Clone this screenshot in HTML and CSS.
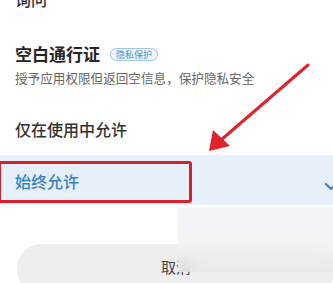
FILE: index.html
```html
<!DOCTYPE html>
<html lang="zh">
<head>
<meta charset="utf-8">
<link rel="stylesheet" href="styles.css">
</head>
<body>
<div class="sheet">
  <div class="opt opt-top">询问</div>
  <div class="opt-block">
    <div class="title-row">
      <span class="title">空白通行证</span>
      <span class="badge">隐私保护</span>
    </div>
    <div class="desc">授予应用权限但返回空信息，保护隐私安全</div>
  </div>
  <div class="opt opt-plain">仅在使用中允许</div>
  <div class="opt-selected">
    <span class="sel-text">始终允许</span>
    <svg class="chev" width="14" height="10" viewBox="0 0 14 10"><path d="M2 2 L7 7 L12 2" fill="none" stroke="#3d7fc0" stroke-width="2" stroke-linecap="round" stroke-linejoin="round"/></svg>
  </div>
  <div class="btn-wrap">
    <div class="cancel">取消</div>
  </div>
  <div class="red-box"></div>
  <svg class="arrow" width="333" height="283" viewBox="0 0 333 283">
    <line x1="308" y1="65" x2="221" y2="140" stroke="#e0222c" stroke-width="3" stroke-linecap="round"/>
    <polygon points="209,151 213,130 230,146" fill="#e0222c"/>
  </svg>
  <div class="veil"></div>
</div>
</body>
</html>
```
FILE: styles.css
```css
html, body {
  margin: 0;
  padding: 0;
  background: #ffffff;
}
body {
  width: 333px;
  height: 283px;
  overflow: hidden;
  font-family: "Noto Sans CJK SC", "Noto Sans", sans-serif;
}
.sheet {
  position: relative;
  width: 333px;
  height: 283px;
  overflow: hidden;
  display: flex;
  flex-direction: column;
}
.sheet > * {
  flex-shrink: 0;
}
.opt {
  padding-left: 15px;
  font-size: 16px;
  color: #333333;
  line-height: 22px;
  height: 22px;
}
.opt-top {
  margin-top: -12px;
  font-weight: 500;
}
.opt-block {
  padding-left: 15px;
  margin-top: 33px;
  display: flex;
  flex-direction: column;
  gap: 5px;
}
.title-row {
  display: flex;
  align-items: center;
  gap: 10px;
  height: 22px;
}
.title {
  font-size: 17px;
  font-weight: 700;
  color: #262626;
  line-height: 22px;
}
.badge {
  font-size: 9px;
  line-height: 11px;
  color: #4a8fd0;
  background: #eef5fd;
  border: 1px solid #9cc3ea;
  border-radius: 8px;
  padding: 0 5px;
}
.desc {
  font-size: 12.6px;
  line-height: 16px;
  color: #666666;
  white-space: nowrap;
}
.opt-plain {
  margin-top: 32px;
  font-weight: 500;
}
.opt-selected {
  margin-top: 15px;
  height: 50px;
  background: #e5f0fb;
  display: flex;
  align-items: center;
  justify-content: space-between;
  padding-left: 15px;
  padding-top: 2px;
  box-sizing: border-box;
}
.sel-text {
  font-size: 16px;
  font-weight: 500;
  color: #3a82c4;
}
.chev {
  margin-right: -5px;
  margin-top: 12px;
}
.btn-wrap {
  margin-top: 39px;
  padding-left: 17px;
}
.cancel {
  width: 318px;
  height: 50px;
  border-radius: 24px;
  background: #eeeeee;
  color: #444444;
  font-size: 15px;
  text-align: center;
  line-height: 46px;
}
.red-box {
  position: absolute;
  left: -2px;
  top: 161px;
  width: 188px;
  height: 36px;
  border: 3px solid #d6202b;
  border-radius: 3px;
}
.arrow {
  position: absolute;
  left: 0;
  top: 0;
}
.veil {
  position: absolute;
  left: 178px;
  top: 208px;
  width: 160px;
  height: 64px;
  backdrop-filter: blur(6px);
  background: linear-gradient(to bottom, rgba(238, 243, 248, 0.85), rgba(240, 241, 243, 0.8) 55%, rgba(232, 232, 232, 0.85));
}
```
